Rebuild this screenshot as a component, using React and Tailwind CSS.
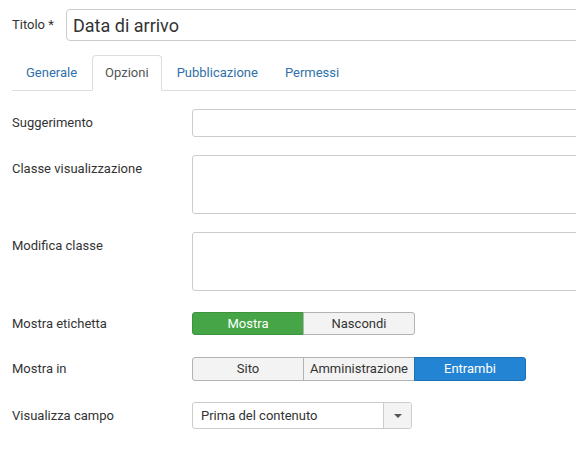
import React from "react";

const tabs = ["Generale", "Opzioni", "Pubblicazione", "Permessi"];

function ToggleGroup({ options, active, activeClass }) {
    return (
        <div className="flex">
            {options.map((opt, i) => {
                const on = i === active;
                const first = i === 0;
                const last = i === options.length - 1;
                return (
                    <div
                        key={opt}
                        className={`w-[112px] flex items-center justify-center border text-[13px] ${
                            on ? activeClass : "bg-[#f3f3f3] border-[#b3b3b3] text-[#333]"
                        } ${first ? "rounded-l-[3px]" : "-ml-px"} ${last ? "rounded-r-[3px]" : ""}`}
                    >
                        {opt}
                    </div>
                );
            })}
        </div>
    );
}

export default function App() {
    return (
        <div className="w-[576px] h-[458px] overflow-hidden bg-white text-[#333] font-['Roboto',sans-serif] text-[13px] pl-3 pt-[9px]">
            {/* Title */}
            <div className="flex items-center">
                <span className="w-[54px] shrink-0 whitespace-nowrap">Titolo *</span>
                <div className="h-[32px] w-[540px] shrink-0 border border-[#ccc] rounded-[4px] flex items-center pl-[6px] text-[18px] text-[#333]">
                    Data di arrivo
                </div>
            </div>

            {/* Tabs */}
            <div className="mt-[14px] flex gap-[3px] pl-[2px] border-b border-[#ddd] h-[36px]">
                {tabs.map((t) => (
                    <div
                        key={t}
                        className={`h-[36px] flex items-center px-3 ${
                            t === "Opzioni"
                                ? "border border-[#ddd] border-b-white rounded-t-[4px] bg-white text-[#555]"
                                : "text-[#3071a9]"
                        }`}
                    >
                        {t}
                    </div>
                ))}
            </div>

            {/* Fields */}
            <div className="mt-[18px] flex">
                <span className="w-[180px] shrink-0 leading-[28px]">Suggerimento</span>
                <div className="h-[28px] w-[400px] shrink-0 border border-[#ccc] rounded-[3px]" />
            </div>

            <div className="mt-[18px] flex items-start">
                <span className="w-[180px] shrink-0 leading-[28px]">Classe visualizzazione</span>
                <div className="h-[59px] w-[400px] shrink-0 border border-[#ccc] rounded-[3px]" />
            </div>

            <div className="mt-[18px] flex items-start">
                <span className="w-[180px] shrink-0 leading-[28px]">Modifica classe</span>
                <div className="h-[59px] w-[400px] shrink-0 border border-[#ccc] rounded-[3px]" />
            </div>

            <div className="mt-[21px] flex items-center h-[23px]">
                <span className="w-[180px] shrink-0">Mostra etichetta</span>
                <div className="h-[23px] flex">
                    <ToggleGroup
                        options={["Mostra", "Nascondi"]}
                        active={0}
                        activeClass="bg-[#46a546] border-[#3e933e] text-white"
                    />
                </div>
            </div>

            <div className="mt-[22px] flex items-center h-[24px]">
                <span className="w-[180px] shrink-0">Mostra in</span>
                <div className="h-[24px] flex">
                    <ToggleGroup
                        options={["Sito", "Amministrazione", "Entrambi"]}
                        active={2}
                        activeClass="bg-[#2384d3] border-[#1d70b4] text-white"
                    />
                </div>
            </div>

            <div className="mt-[21px] flex items-center h-[27px]">
                <span className="w-[180px] shrink-0">Visualizza campo</span>
                <div className="h-[27px] w-[220px] shrink-0 border border-[#ccc] rounded-[3px] flex overflow-hidden">
                    <div className="flex-1 flex items-center pl-2 text-[#333]">Prima del contenuto</div>
                    <div className="w-[28px] bg-[#f3f3f3] border-l border-[#ccc] flex items-center justify-center">
                        <svg width="8" height="4" viewBox="0 0 8 4">
                            <path d="M0 0h8L4 4z" fill="#555" />
                        </svg>
                    </div>
                </div>
            </div>
        </div>
    );
}
